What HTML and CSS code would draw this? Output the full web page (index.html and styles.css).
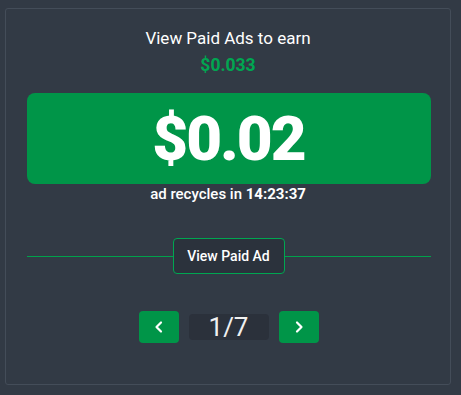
FILE: index.html
```html
<!DOCTYPE html>
<html>
<head>
<meta charset="utf-8">
<link rel="stylesheet" href="styles.css">
</head>
<body>
<div class="card">
  <div class="title">View Paid Ads to earn</div>
  <div class="earn">$0.033</div>
  <div class="amount-box"><span class="amount">$0.02</span></div>
  <div class="recycle">ad recycles in <b>14:23:37</b></div>
  <div class="divider">
    <span class="line"></span>
    <button class="view-btn">View Paid Ad</button>
    <span class="line"></span>
  </div>
  <div class="pager">
    <button class="nav-btn" aria-label="previous"><svg width="12" height="14" viewBox="0 0 12 14"><path d="M8 2.5 L3.5 7 L8 11.5" fill="none" stroke="#fff" stroke-width="2.2" stroke-linecap="round" stroke-linejoin="round"/></svg></button>
    <div class="page">1/7</div>
    <button class="nav-btn" aria-label="next"><svg width="12" height="14" viewBox="0 0 12 14"><path d="M4 2.5 L8.5 7 L4 11.5" fill="none" stroke="#fff" stroke-width="2.2" stroke-linecap="round" stroke-linejoin="round"/></svg></button>
  </div>
</div>
</body>
</html>
```

FILE: styles.css
```css
html, body {
  margin: 0;
  padding: 0;
  background: #323a45;
  font-family: Roboto, "Liberation Sans", sans-serif;
  color: #fff;
}
.card {
  margin: 8px 0 0 5px;
  width: 444px;
  height: 375px;
  border: 1px solid #444d59;
  border-radius: 3px;
  box-sizing: content-box;
  display: flex;
  flex-direction: column;
  align-items: center;
  padding: 0;
}
.title {
  margin-top: 17px;
  font-size: 17px;
  line-height: 24px;
  font-weight: 400;
}
.earn {
  margin-top: 3px;
  font-size: 17.5px;
  line-height: 24px;
  font-weight: 700;
  color: #00a651;
}
.amount-box {
  margin-top: 16px;
  width: 404px;
  height: 91px;
  background: #009548;
  border-radius: 8px;
  display: flex;
  align-items: center;
  justify-content: center;
  margin-left: 1px;
}
.amount {
  font-size: 62px;
  font-weight: 900;
  line-height: 1;
  letter-spacing: -2px;
}
.recycle {
  font-size: 15px;
  line-height: 20px;
  font-weight: 500;
}
.recycle b { font-weight: 700; }
.divider {
  margin-top: 34px;
  width: 404px;
  margin-left: 1px;
  display: flex;
  align-items: center;
}
.line {
  flex: 1;
  height: 1px;
  background: #00a14b;
}
.view-btn {
  width: 112px;
  height: 36px;
  background: #2b323c;
  border: 1px solid #00a651;
  border-radius: 4px;
  color: #fff;
  font-family: Roboto, "Liberation Sans", sans-serif;
  font-size: 14px;
  font-weight: 500;
  padding: 0;
}
.pager {
  margin-top: 37px;
  display: flex;
  align-items: center;
  gap: 10px;
  margin-left: 1px;
}
.nav-btn {
  width: 40px;
  height: 32px;
  background: #009548;
  border: none;
  border-radius: 4px;
  display: flex;
  align-items: center;
  justify-content: center;
  padding: 0;
}
.page {
  width: 80px;
  height: 26px;
  background: #2b313b;
  border-radius: 4px;
  font-size: 26px;
  line-height: 26px;
  text-align: center;
  color: #f0f0f0;
}
```
